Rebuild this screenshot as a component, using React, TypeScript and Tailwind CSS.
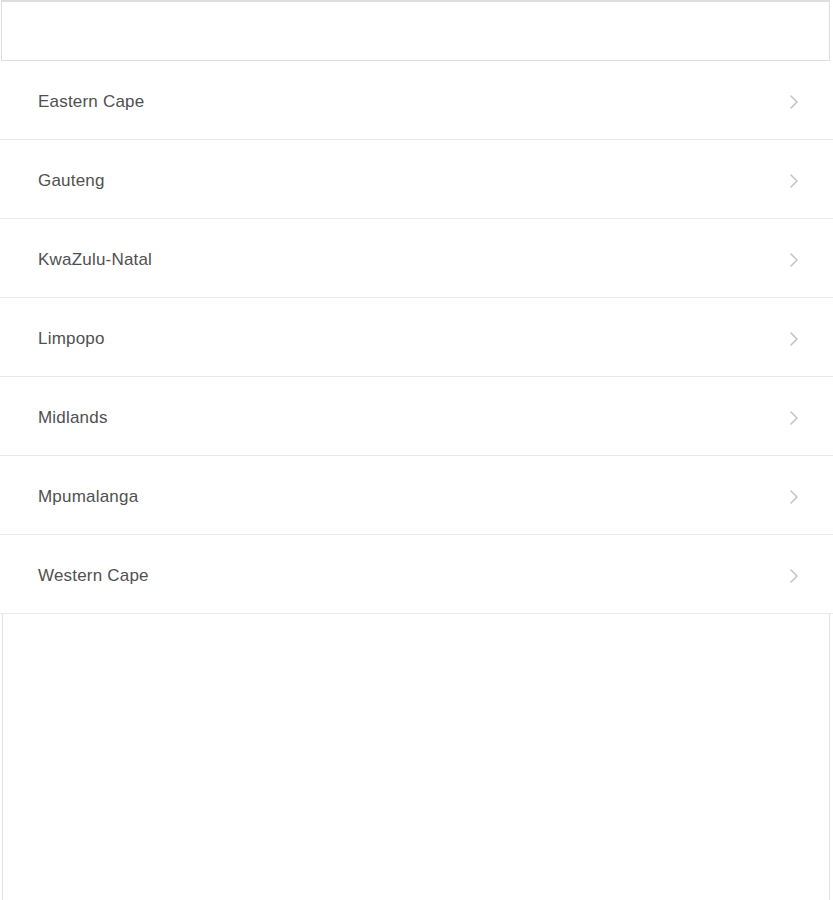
import React from "react"

const provinces = [
  "Eastern Cape",
  "Gauteng",
  "KwaZulu-Natal",
  "Limpopo",
  "Midlands",
  "Mpumalanga",
  "Western Cape",
]

function Chevron() {
  return (
    <svg width="10" height="16" viewBox="0 0 10 16" fill="none" className="shrink-0">
      <path d="M2 2l6 6-6 6" stroke="#c4c4c4" strokeWidth="1.6" strokeLinecap="round" strokeLinejoin="round" />
    </svg>
  )
}

export default function App() {
  return (
    <div
      className="w-[833px] h-[900px] bg-white flex flex-col overflow-hidden"
      style={{ fontFamily: '"Liberation Sans", Arial, sans-serif' }}
    >
      {/* Search bar */}
      <div className="h-[61px] shrink-0 border-t-2 border-x border-b border-[#dedede] ml-[1px] mr-[3px] bg-white" />

      {/* Province list */}
      <ul className="shrink-0">
        {provinces.map((name) => (
          <li
            key={name}
            className="h-[79px] flex items-center justify-between pt-[3px] pl-[38px] pr-[34px] border-b border-[#e9e9e9] text-[17px] tracking-[0.2px] text-[#505050]"
          >
            <span>{name}</span>
            <Chevron />
          </li>
        ))}
      </ul>

      {/* Empty area */}
      <div className="flex-1 ml-[2px] mr-[3px] border-x border-[#e2e2e2]" />
    </div>
  )
}
